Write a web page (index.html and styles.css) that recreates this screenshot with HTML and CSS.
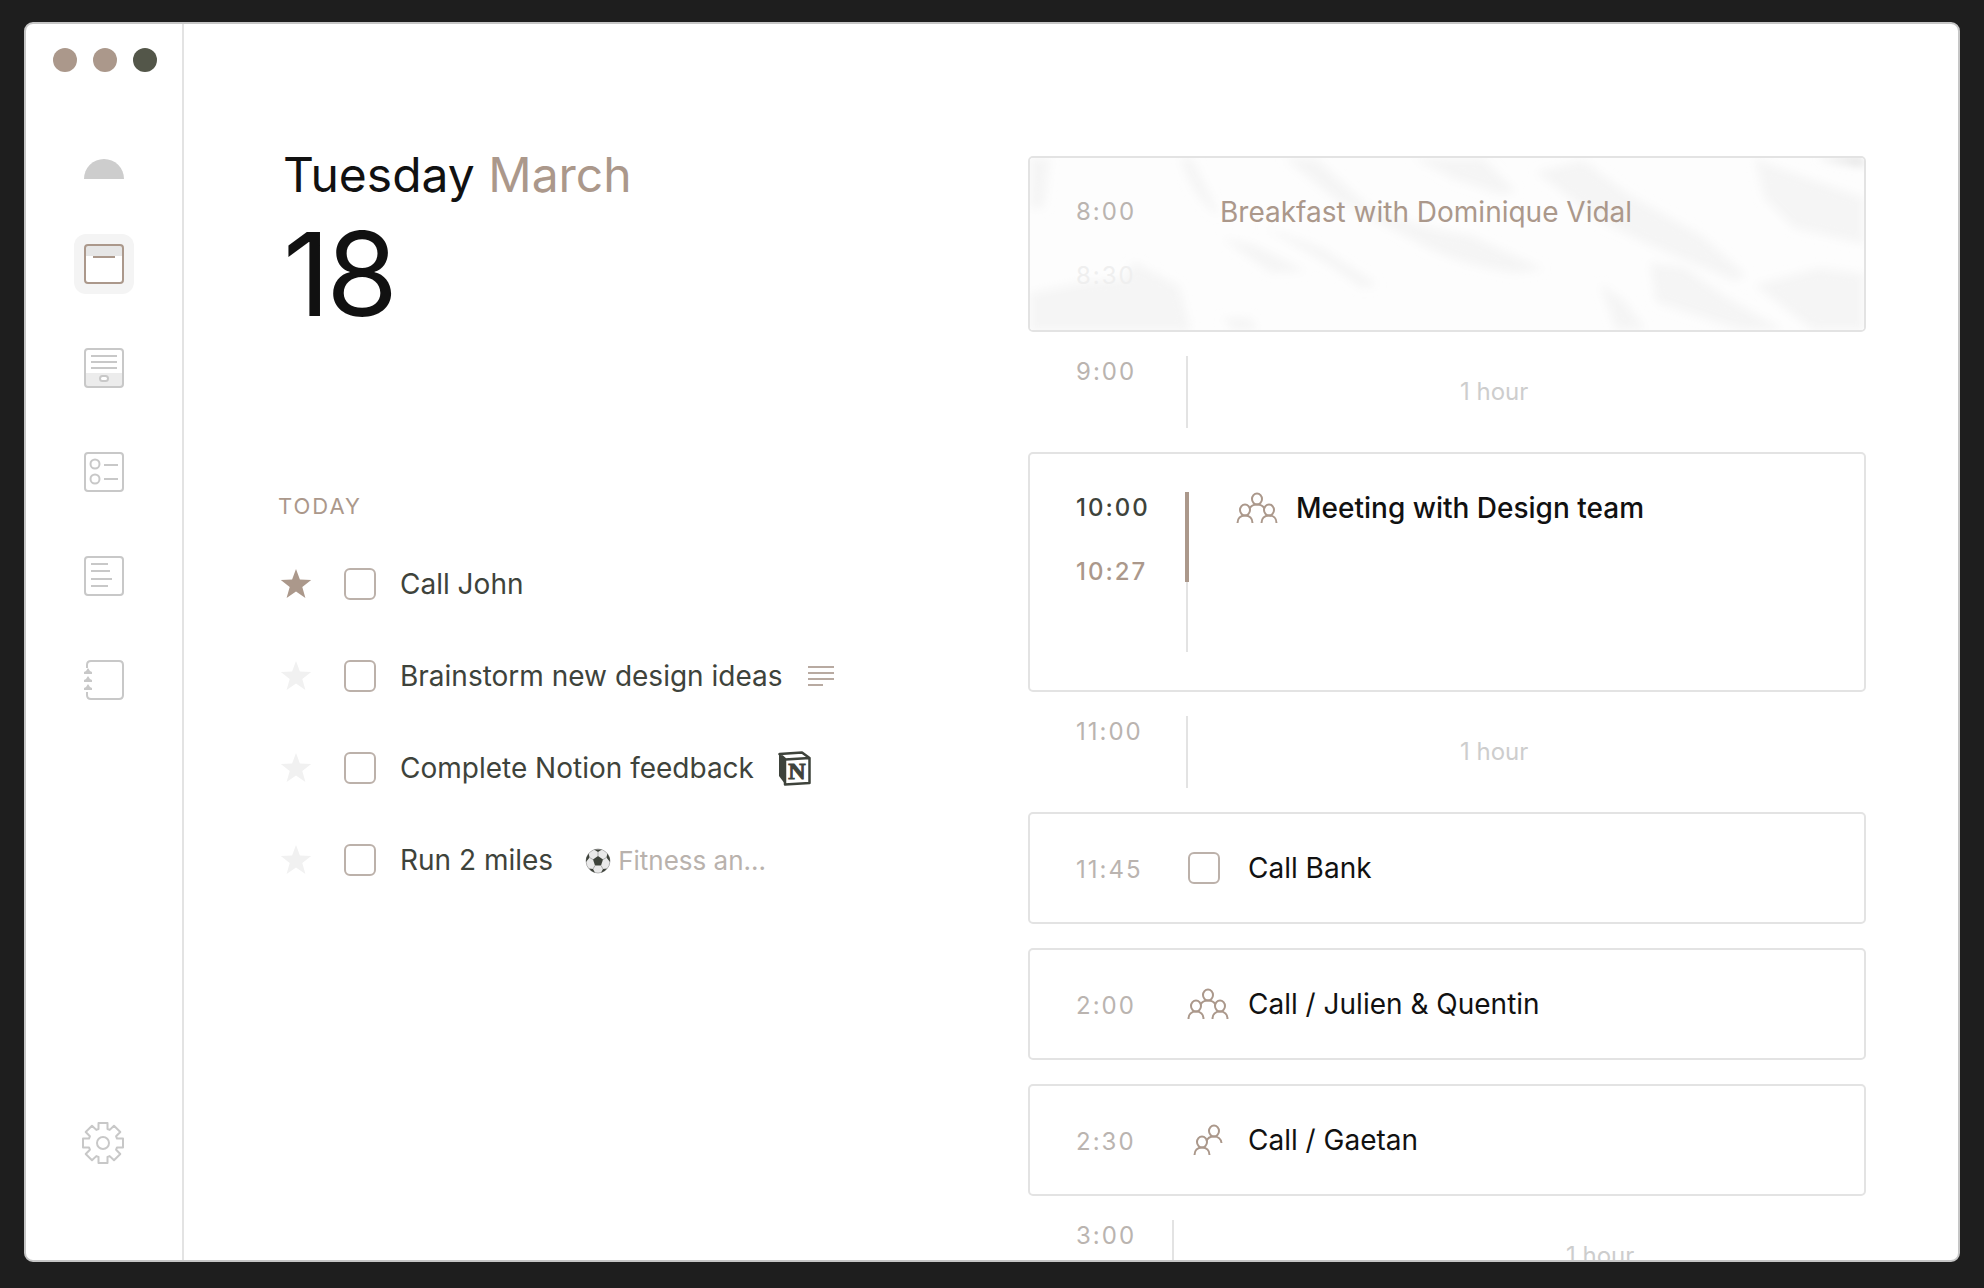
FILE: index.html
```html
<!DOCTYPE html>
<html lang="en">
<head>
<meta charset="utf-8">
<meta name="viewport" content="width=device-width, initial-scale=1">
<title>Tuesday, March 18</title>
<link rel="stylesheet" href="styles.css">
</head>
<body>
<svg class="defs" aria-hidden="true">
  <symbol id="star" viewBox="0 0 32 32"><path fill="currentColor" d="M16 1l3.900 10.600 11.300.4-8.900 7 3.100 10.900-9.400-6.300-9.400 6.300 3.100-10.900-8.900-7 11.300-.4z"/></symbol>
  <symbol id="group" viewBox="0 0 42 32"><g fill="none" stroke="currentColor" stroke-width="2"><ellipse cx="21" cy="7" rx="5" ry="5.500"/><ellipse cx="9" cy="18" rx="5" ry="5.500"/><ellipse cx="33" cy="18" rx="5" ry="5.500"/><path d="M1.500 31c0-4.500 3-7.500 7.500-7.500s7.500 3 7.500 7.500M25.500 31c0-4.500 3-7.500 7.500-7.500s7.500 3 7.500 7.500M13.500 16.500c1.500-2.700 4-4 7.500-4s6 1.300 7.500 4"/></g></symbol>
  <symbol id="pair" viewBox="0 0 30 32"><g fill="none" stroke="currentColor" stroke-width="2"><ellipse cx="21" cy="7" rx="5" ry="5.500"/><ellipse cx="9" cy="18" rx="5" ry="5.500"/><path d="M1.500 31c0-4.500 3-7.500 7.500-7.500s7.500 3 7.500 7.500M13.500 17c1-3 3.500-4.500 7.500-4.500s7.200 2.500 7.500 6.500"/></g></symbol>
</svg>

<div class="window">
  <aside class="sidebar">
    <div class="controls">
      <button class="dot" aria-label="Close"></button>
      <button class="dot" aria-label="Minimize"></button>
      <button class="dot dot-dark" aria-label="Zoom"></button>
    </div>
    <a class="logo" href="#" aria-label="Home"></a>
    <nav class="nav">
      <a class="nav-item active" href="#" aria-label="Today">
        <svg width="40" height="40" viewBox="0 0 40 40"><rect x="1" y="1" width="38" height="38" rx="3" fill="#fff"/><path d="M2 2h36v10H2z" fill="#e6e6e6"/><rect x="1" y="1" width="38" height="38" rx="3" fill="none" stroke="#ab988b" stroke-width="2"/><path d="M9 13h22" stroke="#ab988b" stroke-width="2"/></svg>
      </a>
      <a class="nav-item" href="#" aria-label="Inbox">
        <svg width="40" height="40" viewBox="0 0 40 40"><path d="M2 25h36v13H2z" fill="#ececec"/><g fill="none" stroke="currentColor" stroke-width="2"><rect x="1" y="1" width="38" height="38" rx="3"/><path d="M7 8h26M7 14h26M7 20h26"/><rect x="16" y="28" width="8" height="5" rx="2.500" fill="#fff"/></g></svg>
      </a>
      <a class="nav-item" href="#" aria-label="Tasks">
        <svg width="40" height="40" viewBox="0 0 40 40" fill="none" stroke="currentColor" stroke-width="2"><rect x="1" y="1" width="38" height="38" rx="3"/><circle cx="11" cy="12" r="4.500"/><circle cx="11" cy="27" r="4.500"/><path d="M20 13h14M20 27h14"/></svg>
      </a>
      <a class="nav-item" href="#" aria-label="Notes">
        <svg width="40" height="40" viewBox="0 0 40 40" fill="none" stroke="currentColor" stroke-width="2"><rect x="1" y="1" width="38" height="38" rx="3"/><path d="M7 8h17M7 15h19M7 23h21M7 30h17"/></svg>
      </a>
      <a class="nav-item" href="#" aria-label="Contacts">
        <svg width="40" height="40" viewBox="0 0 40 40"><path d="M3 8V5q0-4 4-4h28q4 0 4 4v30q0 4-4 4H7q-4 0-4-4v-3" fill="none" stroke="currentColor" stroke-width="2"/><path fill="currentColor" d="M0 14v-2l2-1 2-3 2 3 2 1v2zM0 22v-2l2-1 2-3 2 3 2 1v2zM0 30v-2l2-1 2-3 2 3 2 1v2z"/></svg>
      </a>
    </nav>
    <a class="settings" href="#" aria-label="Settings">
      <svg width="42" height="42" viewBox="-21 -21 42 42" fill="none" stroke="currentColor" stroke-width="2" stroke-linejoin="round"><path d="M-4.500-14V-20H4.500V-14L6.700-13.100 11-17.300 17.300-11 13.100-6.700 14-4.500H20V4.500H14L13.100 6.700 17.300 11 11 17.300 6.700 13.100 4.500 14V20H-4.500V14L-6.700 13.100-11 17.300-17.300 11-13.100 6.700-14 4.500H-20V-4.500H-14L-13.100-6.700-17.300-11-11-17.300-6.700-13.100Z"/><circle r="6"/></svg>
    </a>
  </aside>

  <main class="main">
    <section class="day">
      <h1 class="date">Tuesday <span class="month">March</span><span class="number">18</span></h1>
      <h2 class="label">TODAY</h2>
      <ul class="tasks">
        <li class="task">
          <button class="star starred" aria-label="Starred"><svg width="32" height="32"><use href="#star"/></svg></button>
          <input class="check" type="checkbox" id="t1"><label for="t1">Call John</label>
        </li>
        <li class="task">
          <button class="star" aria-label="Star"><svg width="32" height="32"><use href="#star"/></svg></button>
          <input class="check" type="checkbox" id="t2"><label for="t2">Brainstorm new design ideas</label>
          <svg class="extra" width="28" height="22" viewBox="0 0 28 22" stroke="#b8aaa1" stroke-width="2"><path d="M1 2h26M1 8h26M1 14h26M1 20h15"/></svg>
        </li>
        <li class="task">
          <button class="star" aria-label="Star"><svg width="32" height="32"><use href="#star"/></svg></button>
          <input class="check" type="checkbox" id="t3"><label for="t3">Complete Notion feedback</label>
          <svg class="extra" width="34" height="38" viewBox="0 0 34 38"><path d="M1 5l6 6v24l-6-8z" fill="#3e433b"/><path d="M1.500 5L24 3.500l7.500 5.500L7.500 10.500zM7 10.500L31.500 9v25L7 35.500z" fill="#fff" stroke="#3e433b" stroke-width="2.500" stroke-linejoin="round"/><text x="19" y="30" text-anchor="middle" class="notion-n">N</text></svg>
        </li>
        <li class="task">
          <button class="star" aria-label="Star"><svg width="32" height="32"><use href="#star"/></svg></button>
          <input class="check" type="checkbox" id="t4"><label for="t4">Run 2 miles</label>
          <a class="tag" href="#"><svg width="26" height="26" viewBox="0 0 26 26"><circle cx="13" cy="13" r="12" fill="#e9e9e9" stroke="#b5b5b5"/><path d="M13 8l5 3.600-2 5.900h-6l-2-5.900z" fill="#3e433b"/><path d="M9 1.500h8L13 4zM1.200 10l2.400-4.500 1 4L1 14zM24.800 10l-2.400-4.500-1 4L25 14zM4 20.500l4 .5 2 3.700q-4-1-6-4.200zM22 20.500l-4 .5-2 3.700q4-1 6-4.200z" fill="#3e433b"/><path d="M13 4v4M4.600 9.500L8 11.600M21.400 9.500L18 11.600M8 21l2-3.500M18 21l-2-3.500" stroke="#aaa"/></svg>Fitness an...</a>
        </li>
      </ul>
    </section>

    <section class="schedule" aria-label="Schedule">
      <article class="card past">
        <svg class="fabric" viewBox="0 0 834 172" preserveAspectRatio="none" aria-hidden="true">
          <filter id="soft" x="-5%" y="-5%" width="110%" height="110%"><feGaussianBlur stdDeviation="5"/></filter>
          <rect width="834" height="172" fill="#fdfdfd"/>
          <g filter="url(#soft)" fill="#f5f5f5">
            <path d="M150 0h12l28 58q-25-14-40-58zM254 0h32l52 48q60 24 104 30l72 33-28 4q-60-8-101-32l-76-39z"/>
            <path d="M383 0h70l33 34-17 2-45-15zM506 14l47-12 45 34 73 41 45 40-11 6-90-38-45-22zM725 0l30 12 79 28v46l-70-16-30-30z"/>
            <path d="M620 105l34 4 39 28 60 35h-43l-84-28zM725 127l64-17 45 6v56h-51zM0 135l60-12 33-2 11-17 45 24 12 45H0z"/>
            <path d="M192 80l30 6 54 27-34 2zM232 68l60 22 56 37-16 3-34-24zM570 126l24 16 22 30h-30zM192 160h28l8 12h-24zM0 0h20l-6 50H0z"/>
            <path d="M786 0h48v8z" fill="#ddd"/>
          </g>
        </svg>
        <div class="times"><time>8:00</time><time class="ghost">8:30</time></div>
        <h3 class="title">Breakfast with Dominique Vidal</h3>
      </article>
      <div class="free"><time>9:00</time><span class="rule"></span><span class="length">1 hour</span></div>
      <article class="card current">
        <div class="times"><time class="start">10:00</time><time class="now">10:27</time></div>
        <span class="rule"><span class="progress" style="height:56%"></span></span>
        <svg class="people" width="42" height="32"><use href="#group"/></svg>
        <h3 class="title">Meeting with Design team</h3>
      </article>
      <div class="free"><time>11:00</time><span class="rule"></span><span class="length">1 hour</span></div>
      <article class="card event">
        <time>11:45</time>
        <span class="slot"><input class="check" type="checkbox" id="bank"></span>
        <h3 class="title"><label for="bank">Call Bank</label></h3>
      </article>
      <article class="card event">
        <time>2:00</time>
        <span class="slot centered"><svg width="42" height="32"><use href="#group"/></svg></span>
        <h3 class="title">Call / Julien &amp; Quentin</h3>
      </article>
      <article class="card event">
        <time>2:30</time>
        <span class="slot centered"><svg width="30" height="32"><use href="#pair"/></svg></span>
        <h3 class="title">Call / Gaetan</h3>
      </article>
      <div class="free late"><time>3:00</time><span class="rule"></span><span class="length">1 hour</span></div>
    </section>
  </main>
</div>
</body>
</html>
```
FILE: styles.css
```css
:root {
  --brown: #ab988b;
  --line: #e3e3e3;
  --grey: #c8c8c8;
  --time: #bab4b0;
  --ink: #111;
  --green: #3e433b;
}

* { box-sizing: border-box; }

body {
  margin: 0;
  height: 100vh;
  padding: 22px 24px 26px;
  background: #1e1e1e;
  color: var(--ink);
  font-family: Inter, "Liberation Sans", sans-serif;
  font-size: 28px;
  line-height: 32px;
}

h1, h2, h3, ul { margin: 0; padding: 0; font-size: inherit; font-weight: 400; }
button { padding: 0; border: 0; background: none; cursor: pointer; }
a { color: inherit; text-decoration: none; }
svg { display: block; flex: none; }
.defs { position: absolute; width: 0; height: 0; }

.window {
  display: flex;
  height: 100%;
  overflow: hidden;
  background: #fff;
  border: 2px solid #c6c6c6;
  border-radius: 9px;
}

/* Sidebar */
.sidebar {
  display: flex;
  flex: none;
  flex-direction: column;
  align-items: center;
  width: 158px;
  padding: 24px 0 96px;
  border-right: 2px solid var(--line);
  color: var(--grey);
}
.controls { display: flex; gap: 16px; padding-left: 2px; }
.dot { width: 24px; height: 24px; border-radius: 50%; background: var(--brown); }
.dot-dark { background: #535649; }
.logo {
  width: 40px;
  height: 20px;
  margin: 87px 0 55px;
  border-radius: 20px 20px 0 0;
  background: #cdcdcd;
}
.nav { display: flex; flex-direction: column; gap: 44px; }
.nav-item { padding: 10px; border-radius: 12px; }
.nav-item.active { background: #f4f4f4; }
.settings { margin-top: auto; padding-right: 2px; }

/* Main columns */
.main {
  display: grid;
  flex: 1;
  grid-template-columns: minmax(0, 750fr) minmax(0, 838fr);
  min-width: 0;
  padding: 0 92px 0 94px;
}
.day { padding-top: 122px; }
.date { padding-left: 5px; font-size: 48px; line-height: 58px; }
.month { color: var(--brown); }
.number { display: block; margin-top: 12px; font-size: 116px; font-weight: 400; line-height: 116px; letter-spacing: -4px; }
.label { margin: 160px 0 48px; color: var(--brown); font-size: 22px; line-height: 28px; letter-spacing: 2px; }
.tasks { display: flex; flex-direction: column; gap: 60px; list-style: none; }
.task { display: flex; align-items: center; height: 32px; color: var(--green); }
.star { margin: 0 32px 0 2px; color: #f1f1f1; }
.starred { color: var(--brown); }
.check {
  flex: none;
  width: 32px;
  height: 32px;
  margin: 0;
  appearance: none;
  background: #fff;
  border: 2px solid #bcb1aa;
  border-radius: 6px;
}
.check:checked { background: var(--brown); }
.task label { margin-left: 24px; }
.extra { margin-left: 24px; }
.notion-n { fill: var(--green); stroke: var(--green); font-family: "Liberation Serif", serif; font-size: 24px; font-weight: 700; }
.tag { display: flex; align-items: center; gap: 7px; margin-left: 32px; padding-top: 2px; color: #b9b2ad; font-size: 26px; }

/* Schedule */
.schedule { display: flex; flex-direction: column; gap: 24px; min-height: 0; padding-top: 132px; overflow: hidden; }
.schedule > * { flex: none; }
time { color: var(--time); font-size: 24px; letter-spacing: 2px; }
.card {
  position: relative;
  display: flex;
  padding: 38px 46px;
  border: 2px solid var(--line);
  border-radius: 5px;
  overflow: hidden;
}
.times { position: relative; display: flex; flex-direction: column; gap: 32px; width: 110px; }
.past { color: var(--brown); }
.past .times { width: 144px; }
.past .title { position: relative; }
.ghost { color: #efefef; }
.fabric { position: absolute; inset: 0; width: 100%; height: 100%; }
.rule { flex: none; width: 2px; background: var(--line); }
.current .rule { display: flex; justify-content: center; height: 160px; }
.progress { flex: none; width: 4px; background: var(--brown); }
.current .title { font-weight: 500; }
.start, .now { font-weight: 500; }
.start { color: var(--green); }
.now { color: var(--brown); }
.people { margin: 0 18px 0 48px; color: var(--brown); }

.event { align-items: center; height: 112px; }
.event time { width: 112px; padding-top: 3px; }
.slot { display: flex; flex: none; width: 60px; color: var(--brown); }
.centered { justify-content: center; padding-right: 20px; }

.free { display: flex; height: 72px; padding-left: 48px; }
.free time { width: 110px; }
.length { align-self: center; margin-left: 272px; color: #cdcdcd; font-size: 24px; }
.late time { width: 96px; }
.late .length { margin-left: 392px; }
```
